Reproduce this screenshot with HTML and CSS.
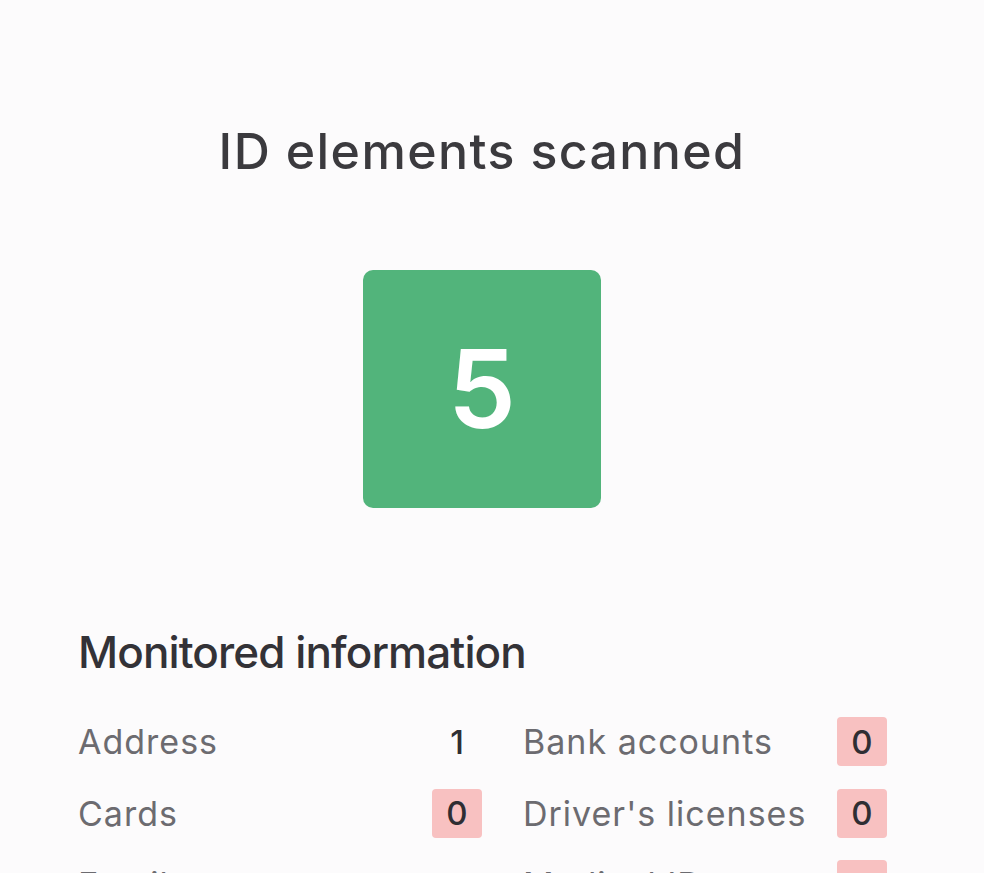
FILE: index.html
```html
<!DOCTYPE html>
<html lang="en">
<head>
<meta charset="utf-8">
<title>ID elements scanned</title>
<link rel="stylesheet" href="styles.css">
</head>
<body>
<main class="page">
  <section class="scan">
    <h1 class="scan-title">ID elements scanned</h1>
    <div class="scan-count">5</div>
  </section>
  <section class="monitored">
    <h2 class="monitored-title">Monitored information</h2>
    <div class="info-grid">
      <div class="info-row"><span class="info-label">Address</span><span class="info-value">1</span></div>
      <div class="info-row"><span class="info-label">Bank accounts</span><span class="info-value is-zero">0</span></div>
      <div class="info-row"><span class="info-label">Cards</span><span class="info-value is-zero">0</span></div>
      <div class="info-row"><span class="info-label">Driver's licenses</span><span class="info-value is-zero">0</span></div>
      <div class="info-row"><span class="info-label">Emails</span><span class="info-value">2</span></div>
      <div class="info-row"><span class="info-label">Medical IDs</span><span class="info-value is-zero">0</span></div>
    </div>
  </section>
</main>
</body>
</html>
```

FILE: styles.css
```css
html, body {
  margin: 0;
  padding: 0;
  background: #fcfbfc;
}

body {
  font-family: "Inter", "Noto Sans", sans-serif;
  color: #3b3a3e;
  overflow: hidden;
  height: 873px;
}

.page {
  width: 984px;
  box-sizing: border-box;
  padding: 121px 98px 0 78px;
}

.scan {
  display: flex;
  flex-direction: column;
  align-items: center;
}

.scan-title {
  margin: 0;
  font-size: 50px;
  line-height: 60px;
  font-weight: 500;
  color: #3b3a3e;
  letter-spacing: 1.4px;
}

.scan-count {
  margin-top: 89px;
  width: 238px;
  height: 238px;
  border-radius: 10px;
  background: #52b47b;
  color: #ffffff;
  display: flex;
  align-items: center;
  justify-content: center;
  font-size: 108px;
  font-weight: 600;
  line-height: 1;
}

.monitored {
  margin-top: 117px;
}

.monitored-title {
  margin: 0;
  font-size: 44px;
  line-height: 54px;
  font-weight: 500;
  color: #333237;
  letter-spacing: -0.9px;
}

.info-grid {
  margin-top: 27px;
  display: grid;
  grid-template-columns: 404px 364px;
  column-gap: 41px;
  grid-auto-rows: 71.5px;
}

.info-row {
  display: flex;
  align-items: center;
  justify-content: space-between;
}

.info-label {
  font-size: 34px;
  letter-spacing: 1px;
  color: #6c6b70;
  font-weight: 400;
  white-space: nowrap;
}

.info-value {
  width: 50px;
  height: 49px;
  border-radius: 4px;
  display: flex;
  align-items: center;
  justify-content: center;
  font-size: 33px;
  font-weight: 500;
  color: #2f2e33;
}

.info-value.is-zero {
  background: #f8c1c1;
}
```
